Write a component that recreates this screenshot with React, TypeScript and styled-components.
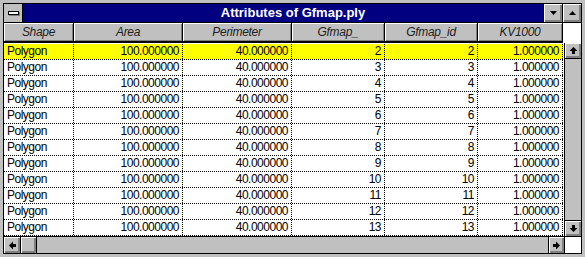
import React from "react";
import styled, { createGlobalStyle } from "styled-components";

const COLS = [70, 109, 109, 93, 93, 85];
const HEADERS = ["Shape", "Area", "Perimeter", "Gfmap_", "Gfmap_id", "KV1000"];

const rows = Array.from({ length: 12 }, (_, i) => ({
  shape: "Polygon",
  area: "100.000000",
  perimeter: "40.000000",
  gfmap: String(i + 2),
  gfmapId: String(i + 2),
  kv: "1.000000",
}));

const App: React.FC = () => {
  return (
    <>
      <GlobalStyle />
      <Frame>
        <Window>
          <TitleBar>
            <SysBox>
              <SysDash />
            </SysBox>
            <Title>Attributes of Gfmap.ply</Title>
            <TitleButton>
              <svg width="7" height="4" viewBox="0 0 7 4">
                <polygon points="0,0 7,0 3.5,4" fill="#000" />
              </svg>
            </TitleButton>
            <TitleButton>
              <svg width="7" height="4" viewBox="0 0 7 4">
                <polygon points="0,4 7,4 3.5,0" fill="#000" />
              </svg>
            </TitleButton>
          </TitleBar>

          <HeaderRow>
            {HEADERS.map((h, i) => (
              <HeaderCell key={h} $w={COLS[i]}>
                {h}
              </HeaderCell>
            ))}
            <HeaderFill />
          </HeaderRow>
          <HeavyRule />

          <Body>
            <Rows>
              {rows.map((r, i) => (
                <Row key={i} $selected={i === 0}>
                  <Cell $w={COLS[0]}>{r.shape}</Cell>
                  <Cell $w={COLS[1]} $num>
                    {r.area}
                  </Cell>
                  <Cell $w={COLS[2]} $num>
                    {r.perimeter}
                  </Cell>
                  <Cell $w={COLS[3]} $num>
                    {r.gfmap}
                  </Cell>
                  <Cell $w={COLS[4]} $num>
                    {r.gfmapId}
                  </Cell>
                  <Cell $w={COLS[5]} $num>
                    {r.kv}
                  </Cell>
                </Row>
              ))}
            </Rows>
            <VScroll>
              <ArrowButton>
                <Arrow dir="up" />
              </ArrowButton>
              <Trough />
              <ArrowButton>
                <Arrow dir="down" />
              </ArrowButton>
            </VScroll>
          </Body>

          <HScroll>
            <ArrowButton $h>
              <Arrow dir="left" />
            </ArrowButton>
            <Thumb />
            <Trough />
            <ArrowButton $h>
              <Arrow dir="right" />
            </ArrowButton>
            <Corner />
          </HScroll>
        </Window>
      </Frame>
    </>
  );
};

export default App;

const Arrow: React.FC<{ dir: "up" | "down" | "left" | "right" }> = ({ dir }) => {
  const rot = { up: 0, right: 90, down: 180, left: 270 }[dir];
  return (
    <svg width="9" height="9" viewBox="0 0 9 9" style={{ transform: `rotate(${rot}deg)` }}>
      <polygon points="4.5,1 8.5,5 6,5 6,8 3,8 3,5 0.5,5" fill="#000" />
    </svg>
  );
};

const GlobalStyle = createGlobalStyle`
  html, body {
    margin: 0;
    padding: 0;
    background: #c0c0c0;
  }
  * {
    box-sizing: border-box;
  }
`;

const Frame = styled.div`
  width: 585px;
  height: 257px;
  padding: 3px;
  background: #c0c0c0;
  font-family: "Liberation Sans", Arial, sans-serif;
`;

const Window = styled.div`
  width: 100%;
  height: 100%;
  border: 1px solid #000;
  display: flex;
  flex-direction: column;
  background: #fff;
  overflow: hidden;
`;

const TitleBar = styled.div`
  height: 19px;
  display: flex;
  background: #000080;
  border-bottom: 1px solid #000;
  flex-shrink: 0;
`;

const SysBox = styled.div`
  width: 19px;
  height: 18px;
  background: #c0c0c0;
  border-right: 1px solid #000;
  display: flex;
  align-items: center;
  justify-content: center;
`;

const SysDash = styled.div`
  width: 11px;
  height: 4px;
  background: #fff;
  border: 1px solid #000;
  box-shadow: 1px 1px 0 #808080;
`;

const Title = styled.div`
  flex: 1;
  color: #fff;
  font-weight: bold;
  font-size: 13px;
  line-height: 18px;
  text-align: center;
  padding-left: 20px;
`;

const TitleButton = styled.div`
  width: 19px;
  height: 18px;
  border-left: 1px solid #000;
  background: #c0c0c0;
  box-shadow: inset 1px 1px 0 #fff, inset -1px -1px 0 #808080, inset -2px -2px 0 #808080;
  display: flex;
  align-items: center;
  justify-content: center;
`;

const HeaderRow = styled.div`
  height: 18px;
  display: flex;
  flex-shrink: 0;
`;

const HeaderCell = styled.div<{ $w: number }>`
  width: ${({ $w }) => $w}px;
  flex-shrink: 0;
  background: #c0c0c0;
  border-right: 1px solid #000;
  box-shadow: inset 1px 1px 0 #fff, inset -1px -1px 0 #808080;
  font-style: italic;
  font-size: 12px;
  line-height: 18px;
  color: #202020;
  text-align: center;
  letter-spacing: -0.3px;
`;

const HeaderFill = styled.div`
  flex: 1;
  background: #fff;
`;

const HeavyRule = styled.div`
  height: 2px;
  background: #000;
  margin-right: 18px;
  flex-shrink: 0;
`;

const Body = styled.div`
  flex: 1;
  display: flex;
  min-height: 0;
`;

const Rows = styled.div`
  width: 560px;
  padding-top: 1px;
  border-right: 1px solid #fff;
  display: flex;
  flex-direction: column;
`;

const Row = styled.div<{ $selected?: boolean }>`
  height: 16px;
  display: flex;
  background: ${({ $selected }) => ($selected ? "#ffff00" : "#fff")};
  border-bottom: 1px dotted #000;
`;

const Cell = styled.div<{ $w: number; $num?: boolean }>`
  width: ${({ $w }) => $w}px;
  flex-shrink: 0;
  border-right: 1px dotted #000;
  font-size: 12px;
  line-height: 15px;
  letter-spacing: -0.5px;
  color: #000;
  white-space: nowrap;
  overflow: hidden;
  text-align: ${({ $num }) => ($num ? "right" : "left")};
  padding: ${({ $num }) => ($num ? "0 3px 0 0" : "0 0 0 3px")};
`;

const VScroll = styled.div`
  width: 17px;
  border-left: 1px solid #000;
  display: flex;
  flex-direction: column;
  background: #c0c0c0;
`;

const ArrowButton = styled.div<{ $h?: boolean }>`
  width: 16px;
  height: 16px;
  flex-shrink: 0;
  background: #c0c0c0;
  box-shadow: inset 1px 1px 0 #fff, inset -1px -1px 0 #808080, inset -2px -2px 0 #808080;
  border-bottom: ${({ $h }) => ($h ? "none" : "1px solid #000")};
  display: flex;
  align-items: center;
  justify-content: center;
  &:last-child {
    border-bottom: none;
  }
  & + div + & {
    border-top: 1px solid #000;
  }
  ${({ $h }) =>
    $h &&
    `
    width: 17px;
    border-right: 1px solid #000;
  `}
`;

const Trough = styled.div`
  flex: 1;
  background: #c0c0c0;
`;

const HScroll = styled.div`
  height: 17px;
  flex-shrink: 0;
  border-top: 1px solid #000;
  display: flex;
  background: #c0c0c0;

  & > ${ArrowButton}:nth-of-type(4) {
    border-left: 1px solid #000;
  }
`;

const Thumb = styled.div`
  width: 16px;
  height: 16px;
  background: #c0c0c0;
  border-right: 1px solid #000;
  box-shadow: inset 1px 1px 0 #fff, inset -1px -1px 0 #808080, inset -2px -2px 0 #808080;
`;

const Corner = styled.div`
  width: 16px;
  height: 16px;
  background: #fff;
`;
